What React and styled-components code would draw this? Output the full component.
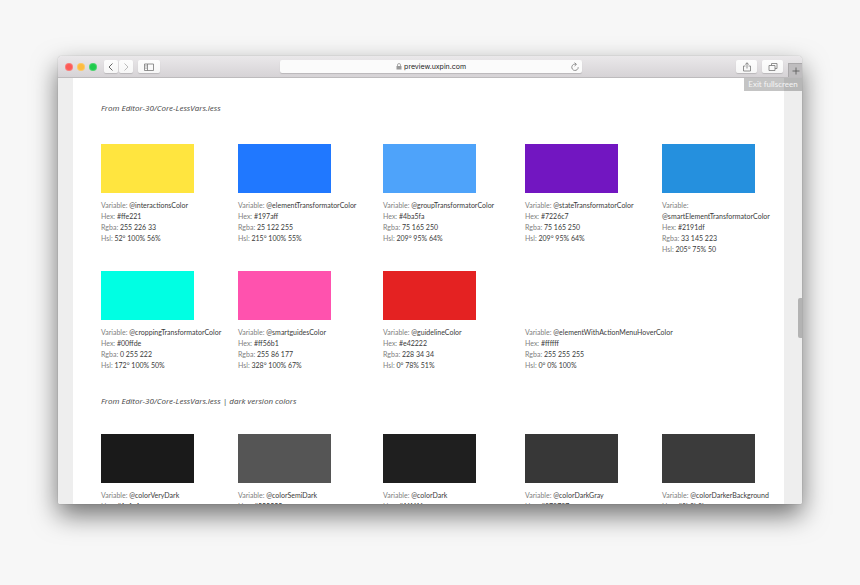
import styled, { createGlobalStyle } from "styled-components";

const interfaceColors = [
  { name: "interactionsColor", hex: "ffe221", fill: "#ffe53f", rgba: "255 226 33", hsl: "52° 100% 56%" },
  { name: "elementTransformatorColor", hex: "197aff", fill: "#2078ff", rgba: "25 122 255", hsl: "215° 100% 55%" },
  { name: "groupTransformatorColor", hex: "4ba5fa", fill: "#4ea3fa", rgba: "75 165 250", hsl: "209° 95% 64%" },
  { name: "stateTransformatorColor", hex: "7226c7", fill: "#7216c1", rgba: "75 165 250", hsl: "209° 95% 64%" },
  { name: "smartElementTransformatorColor", hex: "2191df", fill: "#2590de", rgba: "33 145 223", hsl: "205° 75% 50" },
  { name: "croppingTransformatorColor", hex: "00ffde", fill: "#00ffe3", rgba: "0 255 222", hsl: "172° 100% 50%" },
  { name: "smartguidesColor", hex: "ff56b1", fill: "#ff52ae", rgba: "255 86 177", hsl: "328° 100% 67%" },
  { name: "guidelineColor", hex: "e42222", fill: "#e42222", rgba: "228 34 34", hsl: "0° 78% 51%" },
  { name: "elementWithActionMenuHoverColor", hex: "ffffff", fill: "#ffffff", rgba: "255 255 255", hsl: "0° 0% 100%", wide: true },
];

const darkColors = [
  { name: "colorVeryDark", hex: "1a1a1a", fill: "#1a1a1a" },
  { name: "colorSemiDark", hex: "555555", fill: "#555555" },
  { name: "colorDark", hex: "1f1f1f", fill: "#1f1f1f" },
  { name: "colorDarkGray", hex: "373737", fill: "#373737" },
  { name: "colorDarkerBackground", hex: "3b3b3b", fill: "#3b3b3b" },
];

const Icon = ({ size = 10, width = size, children }) => (
  <svg
    width={width}
    height={size}
    viewBox={`0 0 ${width} ${size}`}
    fill="none"
    stroke="currentColor"
    aria-hidden="true"
  >
    {children}
  </svg>
);

const ColorCard = ({ color: { name, hex, fill, rgba, hsl, wide } }) => (
  <Card $wide={wide}>
    <Swatch $fill={fill} />
    <Specs>
      <div>
        <dt>Variable:</dt> <dd>@{name}</dd>
      </div>
      <div>
        <dt>Hex:</dt> <dd>#{hex}</dd>
      </div>
      {rgba && (
        <div>
          <dt>Rgba:</dt> <dd>{rgba}</dd>
        </div>
      )}
      {hsl && (
        <div>
          <dt>Hsl:</dt> <dd>{hsl}</dd>
        </div>
      )}
    </Specs>
  </Card>
);

const Toolbar = () => (
  <Bar>
    <Side $grow={15}>
      <Lights>
        <Light $color="#fc5b57" />
        <Light $color="#fdbc40" />
        <Light $color="#1fcb4b" />
      </Lights>
      <ButtonGroup>
        <ToolButton $width="14px" $color="#666" aria-label="Back">
          <Icon>
            <path d="M6.5 1.5 3 5l3.5 3.5" />
          </Icon>
        </ToolButton>
        <ToolButton $width="14px" $color="#bbb" aria-label="Forward">
          <Icon>
            <path d="M3.5 1.5 7 5 3.5 8.5" />
          </Icon>
        </ToolButton>
      </ButtonGroup>
      <ToolButton $width="22px" aria-label="Show sidebar">
        <Icon>
          <path d="M.5 2h9v6.5h-9zM3.5 2v6.5M1.5 3.6h1M1.5 5h1M1.5 6.4h1" strokeWidth=".8" />
        </Icon>
      </ToolButton>
    </Side>
    <Address>
      <Icon size={7} width={6}>
        <path d="M.5 3h5v3.5h-5z" fill="#999" stroke="none" />
        <path d="M1.5 3V2a1.5 1.5 0 0 1 3 0v1" stroke="#999" strokeWidth=".8" />
      </Icon>
      <AddressInput aria-label="Address" defaultValue="preview.uxpin.com" />
      <Reload aria-label="Reload">
        <Icon>
          <path d="M6.2 2.3A3.2 3.2 0 1 0 8.2 5.2M4.6.6l1.8 1.8-1.8 1.6" strokeWidth=".8" />
        </Icon>
      </Reload>
    </Address>
    <Side $grow={14} $end>
      <ToolButton $width="21px" aria-label="Share">
        <Icon>
          <path d="M3.5 4h-2v5h7V4h-2M5 6.5V.8M3.2 2.5 5 .8l1.8 1.7" strokeWidth=".8" />
        </Icon>
      </ToolButton>
      <ToolButton $width="21px" aria-label="Show tabs">
        <Icon>
          <path d="M3.5 3.5v-2H9v5H7M1 3.5h6v5H1z" strokeWidth=".8" />
        </Icon>
      </ToolButton>
    </Side>
    <NewTab aria-label="New tab">
      <Icon>
        <path d="M5 1.5v7M1.5 5h7" strokeWidth=".8" />
      </Icon>
    </NewTab>
  </Bar>
);

const App = () => {
  return (
    <>
      <GlobalStyle />
      <Desktop>
        <Browser>
          <Toolbar />
          <Viewport>
            <Page>
              <Title>From Editor-30/Core-LessVars.less</Title>
              <Palette>
                {interfaceColors.map((color) => (
                  <ColorCard key={color.name} color={color} />
                ))}
              </Palette>
              <Title>From Editor-30/Core-LessVars.less | dark version colors</Title>
              <Palette $compact>
                {darkColors.map((color) => (
                  <ColorCard key={color.name} color={color} />
                ))}
              </Palette>
            </Page>
            <ExitButton>Exit fullscreen</ExitButton>
            <ScrollThumb />
          </Viewport>
        </Browser>
      </Desktop>
    </>
  );
};

// styled-components
const GlobalStyle = createGlobalStyle`
  * {
    box-sizing: border-box;
  }
  body {
    margin: 0;
    background: #f7f7f7;
    font-family: Lato, "Noto Sans", sans-serif;
  }
  button {
    padding: 0;
    border: none;
    font-family: inherit;
    cursor: pointer;
  }
`;
const Desktop = styled.div`
  display: flex;
  height: 100vh;
  padding: 56px 58px 81px;
`;
const Browser = styled.div`
  flex: 1;
  display: flex;
  flex-direction: column;
  min-width: 0;
  overflow: hidden;
  border-radius: 4px 4px 2px 2px;
  background: white;
  box-shadow: 0 0 1px rgba(0, 0, 0, 0.4), 0 11px 26px rgba(0, 0, 0, 0.55);
`;
const Bar = styled.div`
  flex: none;
  display: flex;
  align-items: center;
  height: 22px;
  padding-left: 7px;
  border-bottom: 1px solid #bdbbbd;
  background: linear-gradient(#eae8ea, #d6d3d6);
`;
const Side = styled.div`
  flex: ${({ $grow }) => $grow} 1 0;
  display: flex;
  align-items: center;
  justify-content: ${({ $end }) => ($end ? "flex-end" : "flex-start")};
  gap: 5px;
`;
const Lights = styled.div`
  display: flex;
  gap: 4px;
  margin-right: 2px;
`;
const Light = styled.span`
  width: 8px;
  height: 8px;
  border: 1px solid rgba(255, 255, 255, 0.2);
  border-radius: 50%;
  background: ${({ $color }) => $color};
`;
const ButtonGroup = styled.div`
  display: flex;
  gap: 1px;
`;
const ToolButton = styled.button`
  display: flex;
  align-items: center;
  justify-content: center;
  width: ${({ $width }) => $width};
  height: 13px;
  border-radius: 2px;
  color: ${({ $color }) => $color || "#777"};
  background: linear-gradient(#fdfdfd, #f6f6f6);
  box-shadow: 0 1px 1px rgba(0, 0, 0, 0.15);
`;
const Address = styled.div`
  display: flex;
  align-items: center;
  gap: 2px;
  width: 41%;
  height: 13px;
  padding: 0 2px 0 116px;
  border-radius: 2px;
  background: #fbfbfb;
  box-shadow: 0 1px 1px rgba(0, 0, 0, 0.15);
`;
const AddressInput = styled.input`
  flex: 1;
  min-width: 0;
  height: 13px;
  padding: 0;
  border: none;
  outline: none;
  color: #222;
  background: none;
  font: 400 7px/13px Inter, sans-serif;
`;
const Reload = styled.button`
  display: flex;
  color: #777;
  background: none;
`;
const NewTab = styled.button`
  align-self: flex-end;
  display: flex;
  align-items: center;
  justify-content: center;
  width: 14px;
  height: 14px;
  margin-left: 5px;
  border: solid #aaa8aa;
  border-width: 1px 0 0 1px;
  color: #555;
  background: #bfbdbf;
`;
const Viewport = styled.div`
  position: relative;
  flex: 1;
  min-height: 0;
  overflow: hidden;
  padding: 0 18px 0 15px;
  background: #eee;
`;
const Page = styled.main`
  min-height: 100%;
  padding: 24px 0 0 28px;
  background: white;
`;
const Title = styled.h2`
  margin: 0;
  color: #444;
  font-family: "Open Sans", sans-serif;
  font-size: 8px;
  font-style: italic;
  font-weight: 400;
  line-height: 12px;
`;
const Palette = styled.div`
  display: grid;
  grid-template-columns: 137fr 145fr 142fr 137fr 122fr;
  row-gap: 16px;
  padding: ${({ $compact }) => ($compact ? "27px 0 0" : "30px 0 24px")};
`;
const Card = styled.div`
  grid-column: span ${({ $wide }) => ($wide ? 2 : 1)};
`;
const Swatch = styled.div`
  width: 93px;
  height: 49px;
  margin-bottom: 7px;
  background: ${({ $fill }) => $fill};
`;
const Specs = styled.dl`
  margin: 0;
  font-size: 7px;
  line-height: 11px;
  dt,
  dd {
    display: inline;
    margin: 0;
  }
  dt {
    color: #808080;
  }
  dd {
    color: #3a3a3a;
  }
`;
const ExitButton = styled.button`
  position: absolute;
  top: 0;
  right: 0;
  width: 58px;
  height: 13px;
  color: #f4f4f4;
  background: rgba(0, 0, 0, 0.23);
  font-size: 8px;
  line-height: 13px;
`;
const ScrollThumb = styled.div`
  position: absolute;
  right: 0;
  bottom: 39%;
  width: 4px;
  height: 40px;
  border-radius: 2px 0 0 2px;
  background: #b3b3b3;
`;

export default App;
